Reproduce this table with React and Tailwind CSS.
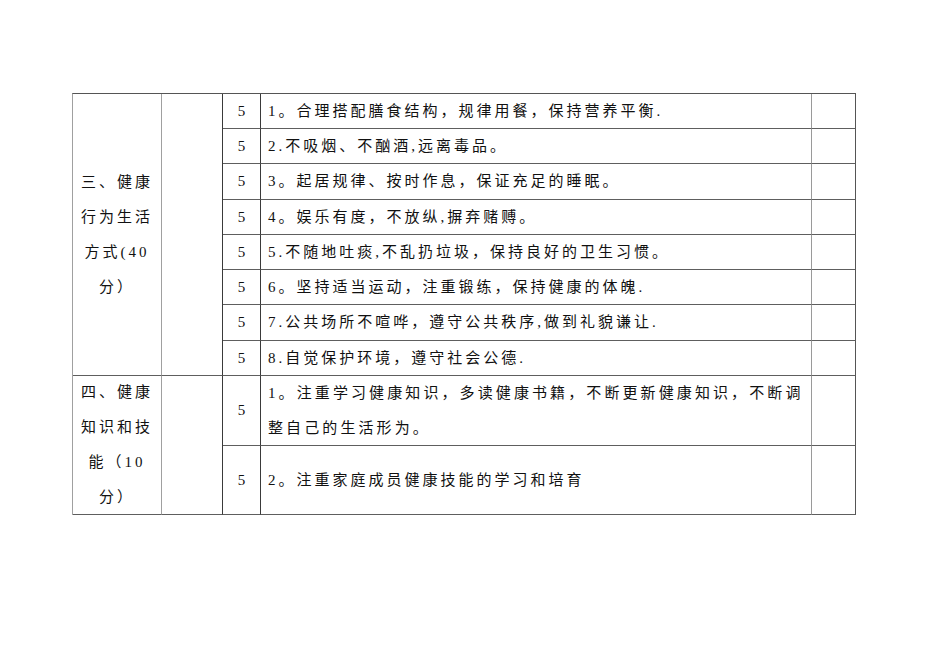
const rows1 = [
  '1。合理搭配膳食结构，规律用餐，保持营养平衡.',
  '2.不吸烟、不酗酒,远离毒品。',
  '3。起居规律、按时作息，保证充足的睡眠。',
  '4。娱乐有度，不放纵,摒弃赌赙。',
  '5.不随地吐痰,不乱扔垃圾，保持良好的卫生习惯。',
  '6。坚持适当运动，注重锻练，保持健康的体魄.',
  '7.公共场所不喧哗，遵守公共秩序,做到礼貌谦让.',
  '8.自觉保护环境，遵守社会公德.',
];

// row heights include the bottom border line
const heights1 = ['h-[35px]', 'h-[35px]', 'h-[36px]', 'h-[35px]', 'h-[35px]', 'h-[35px]', 'h-[36px]', 'h-[35px]'];

function ScoreCell({ h }) {
  return (
    <div className={`${h} flex items-center justify-center border-r border-b border-r-[#3a3a3a] border-b-[#5e5e5e]`}>
      5
    </div>
  );
}

export default function App() {
  return (
    <div className="w-[950px] h-[672px] bg-white pt-[93px] pl-[72px] text-[15px] text-[#111] font-['Liberation_Serif','Noto_Sans_CJK_SC',serif]">
      <div className="flex w-fit border-t border-l border-t-[#555] border-l-[#a0a0a0]">
        {/* 分类 */}
        <div className="flex flex-col w-[89px]">
          <div className="h-[282px] flex flex-col items-center justify-center border-r border-b border-r-[#a0a0a0] border-b-[#5e5e5e] leading-[35px] tracking-[3px]">
            <div>三、健康</div>
            <div>行为生活</div>
            <div>方式(40</div>
            <div>分）</div>
          </div>
          <div className="h-[139px] flex flex-col items-center justify-center border-r border-b border-r-[#a0a0a0] border-b-[#5e5e5e] leading-[35px] tracking-[3px]">
            <div>四、健康</div>
            <div>知识和技</div>
            <div>能（10</div>
            <div>分）</div>
          </div>
        </div>

        {/* 空列 */}
        <div className="flex flex-col w-[61px]">
          <div className="h-[282px] border-r border-b border-r-[#3a3a3a] border-b-[#5e5e5e]" />
          <div className="h-[139px] border-r border-b border-r-[#3a3a3a] border-b-[#5e5e5e]" />
        </div>

        {/* 分值 */}
        <div className="flex flex-col w-[38px]">
          {heights1.map((h, i) => (
            <ScoreCell key={i} h={h} />
          ))}
          <ScoreCell h="h-[70px]" />
          <ScoreCell h="h-[69px]" />
        </div>

        {/* 内容 */}
        <div className="flex flex-col w-[551px]">
          {rows1.map((t, i) => (
            <div
              key={i}
              className={`${heights1[i]} flex items-center pl-[7px] border-r border-b border-r-[#9a9a9a] border-b-[#5e5e5e] tracking-[3px] whitespace-nowrap`}
            >
              {t}
            </div>
          ))}
          <div className="h-[70px] pl-[7px] pr-[2px] border-r border-b border-r-[#9a9a9a] border-b-[#5e5e5e] tracking-[3.1px] leading-[35px]">
            <div className="whitespace-nowrap">1。注重学习健康知识，多读健康书籍，不断更新健康知识，不断调</div>
            <div className="whitespace-nowrap">整自己的生活形为。</div>
          </div>
          <div className="h-[69px] flex items-center pl-[7px] border-r border-b border-r-[#9a9a9a] border-b-[#5e5e5e] tracking-[3px]">
            2。注重家庭成员健康技能的学习和培育
          </div>
        </div>

        {/* 备注 */}
        <div className="flex flex-col w-[44px]">
          {heights1.map((h, i) => (
            <div key={i} className={`${h} border-r border-b border-r-[#555] border-b-[#5e5e5e]`} />
          ))}
          <div className="h-[70px] border-r border-b border-r-[#555] border-b-[#5e5e5e]" />
          <div className="h-[69px] border-r border-b border-r-[#555] border-b-[#5e5e5e]" />
        </div>
      </div>
    </div>
  );
}
